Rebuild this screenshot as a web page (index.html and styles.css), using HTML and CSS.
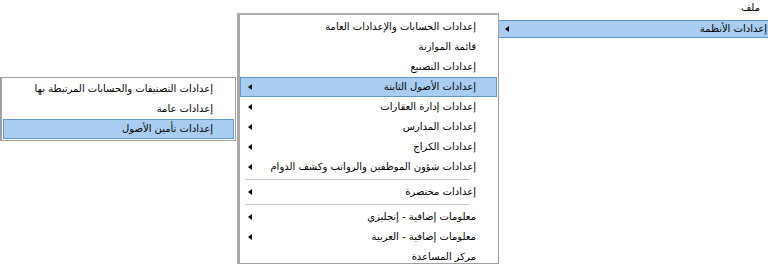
FILE: index.html
```html
<!DOCTYPE html>
<html lang="ar" dir="rtl">
<head>
    <meta charset="UTF-8">
    <meta name="viewport" content="width=device-width, initial-scale=1.0">
    <title>القوائم</title>
    <link rel="stylesheet" href="styles.css">
</head>
<body>
    <div class="menubar">
        <span class="menubar-item">ملف</span>
    </div>

    <!-- قائمة ملف -->
    <div class="menu menu-file">
        <div class="menu-item active has-sub">إعدادات الأنظمة</div>
    </div>

    <!-- إعدادات الأنظمة -->
    <div class="menu menu-systems">
        <div class="menu-item">إعدادات الحسابات والإعدادات العامة</div>
        <div class="menu-item">قائمة الموازنة</div>
        <div class="menu-item">إعدادات التصنيع</div>
        <div class="menu-item active has-sub">إعدادات الأصول الثابتة</div>
        <div class="menu-item has-sub">إعدادات إدارة العقارات</div>
        <div class="menu-item has-sub">إعدادات المدارس</div>
        <div class="menu-item has-sub">إعدادات الكراج</div>
        <div class="menu-item has-sub">إعدادات شؤون الموظفين والرواتب وكشف الدوام</div>
        <div class="menu-sep"></div>
        <div class="menu-item has-sub">إعدادات مختصرة</div>
        <div class="menu-sep"></div>
        <div class="menu-item has-sub">معلومات إضافية - إنجليزي</div>
        <div class="menu-item has-sub">معلومات إضافية - العربية</div>
        <div class="menu-item">مركز المساعدة</div>
    </div>

    <!-- إعدادات الأصول الثابتة -->
    <div class="menu menu-assets">
        <div class="menu-item">إعدادات التصنيفات والحسابات المرتبطة بها</div>
        <div class="menu-item">إعدادات عامة</div>
        <div class="menu-item active">إعدادات تأمين الأصول</div>
    </div>
</body>
</html>
```

FILE: styles.css
```css
body {
    margin: 0;
    width: 768px;
    height: 265px;
    overflow: hidden;
    position: relative;
    background: #fff;
    font-family: "DejaVu Sans", sans-serif;
    font-size: 10px;
    color: #000;
}

.menubar {
    height: 15px;
    display: flex;
    align-items: center;
    padding-right: 6px;
}

.menubar-item {
    padding: 0 2px;
}

.menu {
    position: absolute;
    background: #fff;
    box-sizing: border-box;
}

.menu-file {
    top: 20px;
    left: 497px;
    right: -4px;
    padding: 0;
}

.menu-systems {
    top: 13px;
    left: 237px;
    width: 262px;
    height: 251px;
    border: 1px solid #a0a0a0;
    border-left: 3px solid #a8a8a8;
    border-top: 2px solid #b0b0b0;
    padding: 2px 1px 0 0;
}

.menu-assets {
    top: 77px;
    left: 0;
    width: 236px;
    border: 1px solid #a0a0a0;
    border-left-width: 2px;
    padding: 1px;
}

.menu-item {
    position: relative;
    height: 20px;
    padding-right: 20px;
    white-space: nowrap;
    box-sizing: border-box;
    border: 1px solid transparent;
    line-height: 18px;
}

.menu-item.active {
    background: #a9cdf1;
    border-color: #5f97d2;
}

.menu-file .menu-item {
    height: 18px;
    line-height: 16px;
    padding-right: 4px;
}

.has-sub::after {
    content: "";
    position: absolute;
    left: 7px;
    top: 50%;
    margin-top: -3px;
    border-style: solid;
    border-width: 3px 4px 3px 0;
    border-color: transparent #000 transparent transparent;
}

.menu-sep {
    height: 5px;
    margin: 0 28px 0 6px;
    position: relative;
}

.menu-sep::before {
    content: "";
    position: absolute;
    left: 0;
    right: 0;
    top: 2px;
    border-top: 1px solid #c8c8c8;
}
```
